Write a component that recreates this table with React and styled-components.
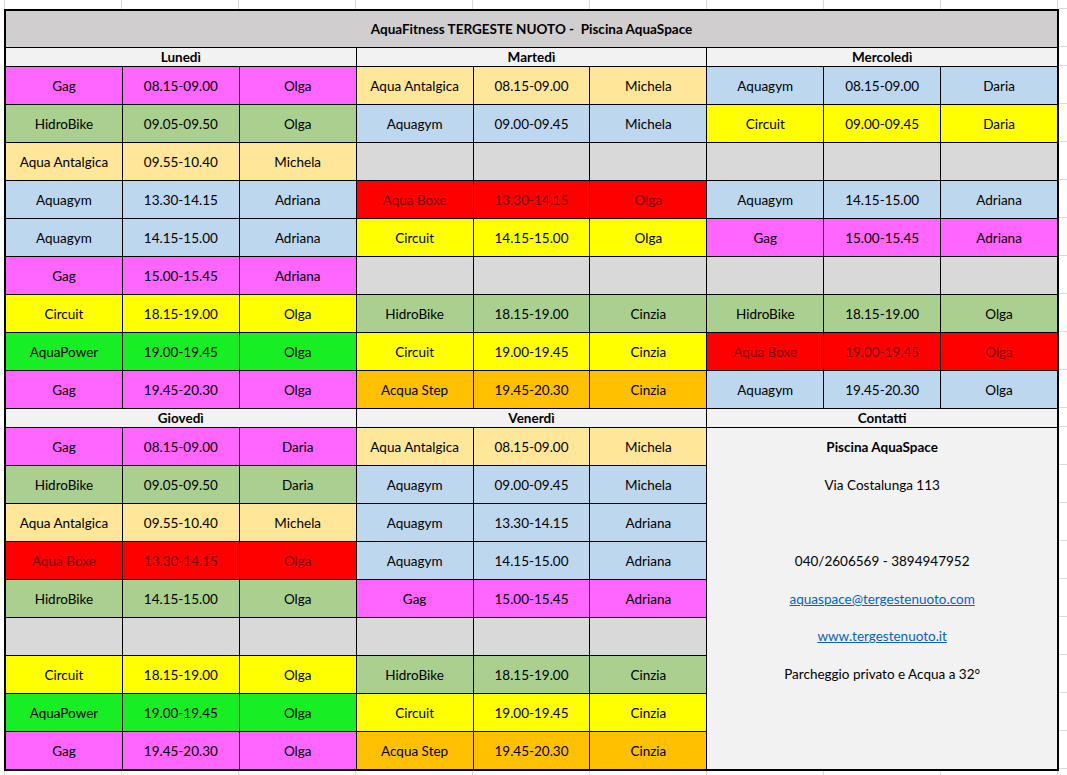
import React from "react";
import styled, { createGlobalStyle } from "styled-components";

const GlobalStyle = createGlobalStyle`
  html, body {
    margin: 0;
    padding: 0;
    background-color: #ffffff;
    background-image: linear-gradient(to right, #dadada 1px, transparent 1px);
    background-size: 117px 100%;
    background-position: 4px 0;
    font-family: Lato, "Open Sans", "Liberation Sans", sans-serif;
  }
`;

const COLORS = {
  "Gag": "#ff66ff",
  "HidroBike": "#a9d08e",
  "Aqua Antalgica": "#ffe699",
  "Aquagym": "#bdd7ee",
  "Circuit": "#ffff00",
  "Aqua Boxe": "#ff0000",
  "AquaPower": "#17ee23",
  "Acqua Step": "#ffc000",
};

const week = [
  {
    name: "Lunedì",
    slots: [
      ["Gag", "08.15-09.00", "Olga"],
      ["HidroBike", "09.05-09.50", "Olga"],
      ["Aqua Antalgica", "09.55-10.40", "Michela"],
      ["Aquagym", "13.30-14.15", "Adriana"],
      ["Aquagym", "14.15-15.00", "Adriana"],
      ["Gag", "15.00-15.45", "Adriana"],
      ["Circuit", "18.15-19.00", "Olga"],
      ["AquaPower", "19.00-19.45", "Olga"],
      ["Gag", "19.45-20.30", "Olga"],
    ],
  },
  {
    name: "Martedì",
    slots: [
      ["Aqua Antalgica", "08.15-09.00", "Michela"],
      ["Aquagym", "09.00-09.45", "Michela"],
      null,
      ["Aqua Boxe", "13.30-14.15", "Olga"],
      ["Circuit", "14.15-15.00", "Olga"],
      null,
      ["HidroBike", "18.15-19.00", "Cinzia"],
      ["Circuit", "19.00-19.45", "Cinzia"],
      ["Acqua Step", "19.45-20.30", "Cinzia"],
    ],
  },
  {
    name: "Mercoledì",
    slots: [
      ["Aquagym", "08.15-09.00", "Daria"],
      ["Circuit", "09.00-09.45", "Daria"],
      null,
      ["Aquagym", "14.15-15.00", "Adriana"],
      ["Gag", "15.00-15.45", "Adriana"],
      null,
      ["HidroBike", "18.15-19.00", "Olga"],
      ["Aqua Boxe", "19.00-19.45", "Olga"],
      ["Aquagym", "19.45-20.30", "Olga"],
    ],
  },
  {
    name: "Giovedì",
    slots: [
      ["Gag", "08.15-09.00", "Daria"],
      ["HidroBike", "09.05-09.50", "Daria"],
      ["Aqua Antalgica", "09.55-10.40", "Michela"],
      ["Aqua Boxe", "13.30-14.15", "Olga"],
      ["HidroBike", "14.15-15.00", "Olga"],
      null,
      ["Circuit", "18.15-19.00", "Olga"],
      ["AquaPower", "19.00-19.45", "Olga"],
      ["Gag", "19.45-20.30", "Olga"],
    ],
  },
  {
    name: "Venerdì",
    slots: [
      ["Aqua Antalgica", "08.15-09.00", "Michela"],
      ["Aquagym", "09.00-09.45", "Michela"],
      ["Aquagym", "13.30-14.15", "Adriana"],
      ["Aquagym", "14.15-15.00", "Adriana"],
      ["Gag", "15.00-15.45", "Adriana"],
      null,
      ["HidroBike", "18.15-19.00", "Cinzia"],
      ["Circuit", "19.00-19.45", "Cinzia"],
      ["Acqua Step", "19.45-20.30", "Cinzia"],
    ],
  },
];

// heights of the sheet rows, used for the empty gridlines right of the table
const sheetRows = [9, 38, 19, ...Array(9).fill(38), 19, ...Array(9).fill(38)];

const Page = styled.div`
  display: flex;
  align-items: flex-start;
`;

const Sheet = styled.div`
  margin: 9px 0 0 4px;
  width: 1055px;
  flex: none;
  display: grid;
  grid-template-columns: repeat(9, 1fr);
  grid-template-rows: 36px 18px repeat(9, 37px) 18px repeat(9, 37px);
  gap: 1px;
  background: #000;
  border: 2px solid #000;
  box-sizing: border-box;
`;

const Gutter = styled.div`
  flex: 1;
  display: flex;
  flex-direction: column;
`;

const GutterRow = styled.div`
  box-sizing: border-box;
  border-bottom: 1px solid #dadada;
`;

const Title = styled.div`
  grid-column: span 9;
  background: #d0cece;
  display: flex;
  align-items: center;
  justify-content: center;
  font-weight: 700;
  font-size: 13.5px;
  color: #000;
  white-space: pre;
`;

const DayHeader = styled.div`
  grid-column: span 3;
  background: #f2f2f2;
  display: flex;
  align-items: center;
  justify-content: center;
  font-weight: 700;
  font-size: 13.5px;
  color: #000;
`;

const Cell = styled.div`
  background: ${(p) => p.$bg};
  color: ${(p) => (p.$bg === "#ff0000" ? "#7a0000" : "#000")};
  display: flex;
  align-items: center;
  justify-content: center;
  font-size: 13.5px;
  white-space: nowrap;
`;

const Contacts = styled.div`
  grid-column: span 3;
  grid-row: span 9;
  background: #f2f2f2;
  display: flex;
  flex-direction: column;
`;

const ContactLine = styled.div`
  flex: 1;
  display: flex;
  align-items: center;
  justify-content: center;
  font-size: 13.5px;
  color: #000;
  font-weight: ${(p) => (p.$bold ? 700 : 400)};
`;

const Link = styled.a`
  color: #0563c1;
  text-decoration: underline;
`;

function Slot({ slot }) {
  if (!slot) {
    return (
      <>
        <Cell $bg="#d9d9d9" />
        <Cell $bg="#d9d9d9" />
        <Cell $bg="#d9d9d9" />
      </>
    );
  }
  const bg = COLORS[slot[0]];
  return (
    <>
      {slot.map((text, i) => (
        <Cell key={i} $bg={bg}>{text}</Cell>
      ))}
    </>
  );
}

function ContactsBlock() {
  return (
    <Contacts>
      <ContactLine $bold>Piscina AquaSpace</ContactLine>
      <ContactLine>Via Costalunga 113</ContactLine>
      <ContactLine />
      <ContactLine>040/2606569 - 3894947952</ContactLine>
      <ContactLine>
        <Link href="#">aquaspace@tergestenuoto.com</Link>
      </ContactLine>
      <ContactLine>
        <Link href="#">www.tergestenuoto.it</Link>
      </ContactLine>
      <ContactLine>Parcheggio privato e Acqua a 32°</ContactLine>
      <ContactLine />
      <ContactLine />
    </Contacts>
  );
}

export default function App() {
  const top = week.slice(0, 3);
  const bottom = week.slice(3);

  return (
    <>
      <GlobalStyle />
      <Page>
        <Sheet>
          <Title>{"AquaFitness TERGESTE NUOTO -  Piscina AquaSpace"}</Title>
          {top.map((d) => <DayHeader key={d.name}>{d.name}</DayHeader>)}
          {top[0].slots.map((_, r) => (
            <React.Fragment key={"t" + r}>
              {top.map((d) => <Slot key={d.name} slot={d.slots[r]} />)}
            </React.Fragment>
          ))}
          {bottom.map((d) => <DayHeader key={d.name}>{d.name}</DayHeader>)}
          <DayHeader>Contatti</DayHeader>
          {bottom[0].slots.map((_, r) => (
            <React.Fragment key={"b" + r}>
              {bottom.map((d) => <Slot key={d.name} slot={d.slots[r]} />)}
              {r === 0 && <ContactsBlock />}
            </React.Fragment>
          ))}
        </Sheet>
        <Gutter>
          {sheetRows.map((h, i) => (
            <GutterRow key={i} style={{ height: h }} />
          ))}
        </Gutter>
      </Page>
    </>
  );
}
